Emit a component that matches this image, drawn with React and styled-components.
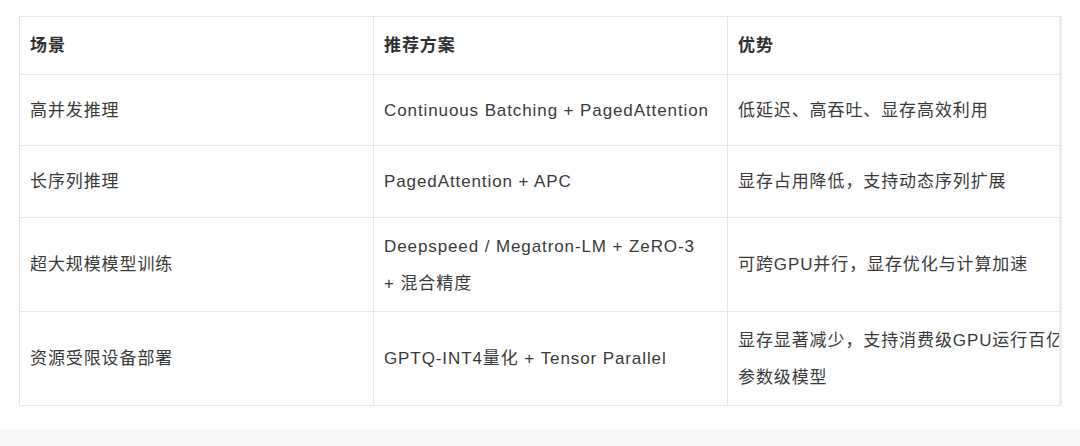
import styled, { createGlobalStyle } from 'styled-components';

const GlobalStyle = createGlobalStyle`
  html, body {
    margin: 0;
    padding: 0;
    background: #ffffff;
  }
`;

const Page = styled.div`
  width: 1080px;
  height: 446px;
  display: flex;
  flex-direction: column;
  overflow: hidden;
  font-family: "Liberation Sans", "Noto Sans CJK SC", sans-serif;
`;

const Scroller = styled.div`
  margin: 16px 0 0 19px;
  width: 1043px;
  overflow: hidden;
  border-right: 3px solid #ececec;
  box-sizing: border-box;
`;

const Table = styled.table`
  width: 1064px;
  border-collapse: collapse;
  table-layout: fixed;
  color: #3a3a3a;
  font-size: 17px;
  letter-spacing: 0.9px;
  line-height: 37px;
`;

const Row = styled.tr`
  height: ${(p) => p.$h}px;
`;

const Head = styled.th`
  border: 1px solid #e6e6e6;
  padding: 0 10px;
  text-align: left;
  vertical-align: middle;
  font-weight: bold;
  color: #2f2f2f;
  white-space: nowrap;
`;

const Cell = styled.td`
  border: 1px solid #e6e6e6;
  padding: 0 10px;
  vertical-align: middle;
  overflow: hidden;
`;

const Keep = styled.span`
  white-space: nowrap;
`;

const Footer = styled.div`
  margin-top: auto;
  height: 17px;
  background: #f8f8f8;
`;

const rows = [
  { h: 71, a: '高并发推理', b: 'Continuous Batching + PagedAttention', c: '低延迟、高吞吐、显存高效利用' },
  { h: 72, a: '长序列推理', b: 'PagedAttention + APC', c: '显存占用降低，支持动态序列扩展' },
  {
    h: 94,
    a: '超大规模模型训练',
    b: (
      <>
        Deepspeed / Megatron-LM + ZeRO-3 <Keep>+ 混合精度</Keep>
      </>
    ),
    c: '可跨GPU并行，显存优化与计算加速',
  },
  { h: 94, a: '资源受限设备部署', b: 'GPTQ-INT4量化 + Tensor Parallel', c: '显存显著减少，支持消费级GPU运行百亿参数级模型' },
];

export default function App() {
  return (
    <Page>
      <GlobalStyle />
      <Scroller>
        <Table>
          <colgroup>
            <col style={{ width: 354 }} />
            <col style={{ width: 354 }} />
            <col style={{ width: 356 }} />
          </colgroup>
          <tbody>
            <Row $h={58}>
              <Head>场景</Head>
              <Head>推荐方案</Head>
              <Head>优势</Head>
            </Row>
            {rows.map((r) => (
              <Row key={r.a} $h={r.h}>
                <Cell>{r.a}</Cell>
                <Cell>{r.b}</Cell>
                <Cell>{r.c}</Cell>
              </Row>
            ))}
          </tbody>
        </Table>
      </Scroller>
      <Footer />
    </Page>
  );
}
